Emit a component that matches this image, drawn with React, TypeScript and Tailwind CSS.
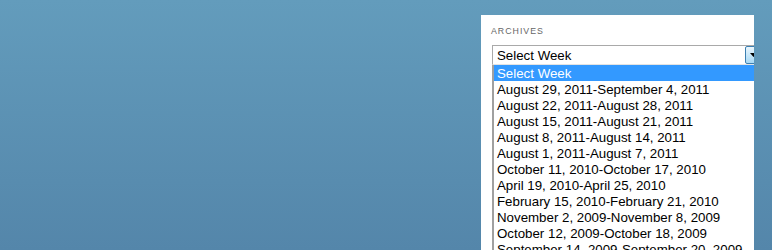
import React from "react";

const weeks = [
  "August 29, 2011-September 4, 2011",
  "August 22, 2011-August 28, 2011",
  "August 15, 2011-August 21, 2011",
  "August 8, 2011-August 14, 2011",
  "August 1, 2011-August 7, 2011",
  "October 11, 2010-October 17, 2010",
  "April 19, 2010-April 25, 2010",
  "February 15, 2010-February 21, 2010",
  "November 2, 2009-November 8, 2009",
  "October 12, 2009-October 18, 2009",
  "September 14, 2009-September 20, 2009",
];

export default function App() {
  return (
    <div
      className="w-[772px] h-[250px] overflow-hidden flex justify-end pr-[18px] pt-[15px] bg-gradient-to-b from-[#639cbc] to-[#5486aa]"
      style={{ fontFamily: '"Liberation Sans", Arial, sans-serif' }}
    >
      <div className="w-[273px] h-[300px] bg-white overflow-hidden pt-[11px] pl-[10px]">
        <div className="text-[8.8px] leading-[11px] tracking-[1px] text-[#666666] h-[19px] font-normal">
          ARCHIVES
        </div>
        <div className="w-[280px] ml-[1px]">
          <div className="relative h-[20px] border border-[#a9a9a9] border-b-[#e3e3e3] border-r-[#dbdbdb] bg-white">
            <div className="pl-[4px] pt-[2px] text-[13.3px] leading-[16px] text-black">Select Week</div>
            <div className="absolute left-[252px] top-0 w-[17px] h-[18px] border border-[#3c7fb1] rounded-[2px] bg-gradient-to-b from-[#eaf6fd] to-[#a7d9f5] flex items-center justify-center">
              <svg width="7" height="4" viewBox="0 0 7 4">
                <polygon points="0,0 7,0 3.5,4" fill="#000" />
              </svg>
            </div>
          </div>
          <div className="border-l-[2px] border-[#a0a0a0] bg-white">
            <div className="h-[16px] bg-[#3399ff] text-white text-[13.3px] leading-[18px] pl-[3px]">
              Select Week
            </div>
            {weeks.map((w) => (
              <div key={w} className="h-[16px] text-black text-[13.3px] leading-[18px] pl-[3px] whitespace-nowrap">
                {w}
              </div>
            ))}
          </div>
        </div>
      </div>
    </div>
  );
}
